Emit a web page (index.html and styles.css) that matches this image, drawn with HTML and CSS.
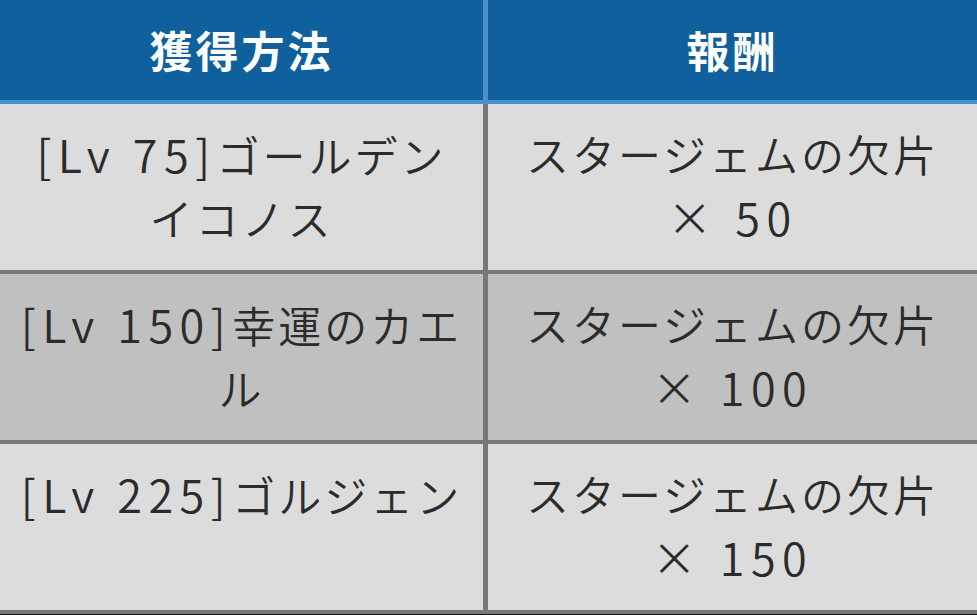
FILE: index.html
```html
<!DOCTYPE html>
<html lang="ja">
<head>
<meta charset="utf-8">
<link rel="stylesheet" href="styles.css">
</head>
<body>
<div class="table">
  <div class="cell head left">獲得方法</div>
  <div class="cell head">報酬</div>

  <div class="cell light left"><span class="lat">[Lv 75]</span>ゴールデン<br>イコノス</div>
  <div class="cell light">スタージェムの欠片<br><span class="lat">× 50</span></div>

  <div class="cell dark left"><span class="lat">[Lv 150]</span>幸運のカエ<br>ル</div>
  <div class="cell dark">スタージェムの欠片<br><span class="lat">× 100</span></div>

  <div class="cell light left"><span class="lat">[Lv 225]</span>ゴルジェン</div>
  <div class="cell light">スタージェムの欠片<br><span class="lat">× 150</span></div>
</div>
</body>
</html>
```
FILE: styles.css
```css
html, body {
  margin: 0;
  padding: 0;
  background: #111;
}
.table {
  display: grid;
  grid-template-columns: 488px 489px;
  width: 977px;
  font-family: "Noto Sans CJK JP", "Noto Sans", sans-serif;
}
.cell {
  box-sizing: border-box;
  text-align: center;
  font-size: 43px;
  font-weight: 350;
  letter-spacing: 3px;
  line-height: 63px;
  color: #2b2b2b;
}
.lat {
  font-size: 45px;
  letter-spacing: 6.5px;
}
.head {
  height: 104px;
  background: #0f609c;
  color: #fff;
  font-size: 43px;
  font-weight: bold;
  letter-spacing: 3px;
  border-bottom: 4px solid #4a90cd;
  display: flex;
  align-items: center;
  justify-content: center;
  padding-bottom: 2px;
}
.head.left {
  border-right: 5px solid #4a90cd;
}
.light, .dark {
  height: 170px;
  padding-top: 18px;
  border-bottom: 4px solid #787878;
}
.light { background: #dcdcdc; }
.dark { background: #c0c0c0; }
.light.left, .dark.left {
  border-right: 5px solid #787878;
}
```
